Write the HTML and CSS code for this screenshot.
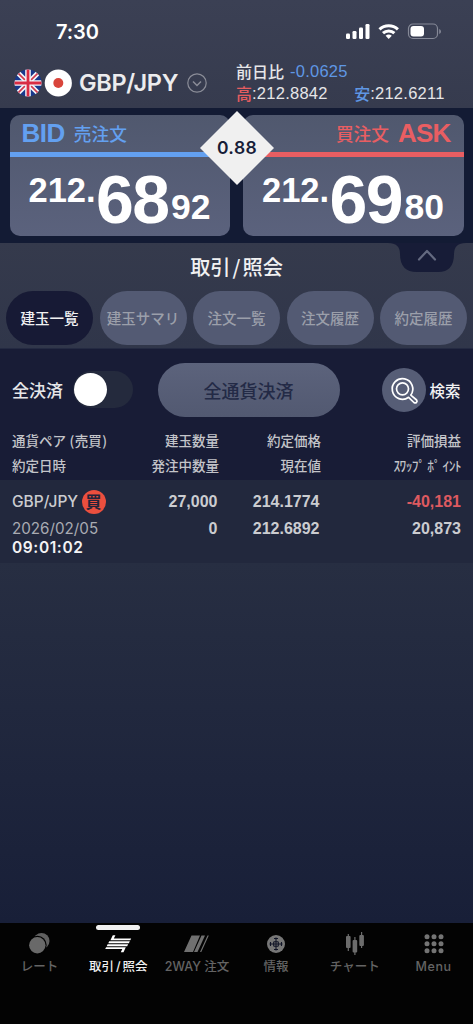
FILE: index.html
```html
<!DOCTYPE html>
<html lang="ja">
<head>
<meta charset="utf-8">
<meta name="viewport" content="width=device-width, initial-scale=1">
<title>取引/照会</title>
<link rel="stylesheet" href="styles.css">
</head>
<body>
<div class="app">
  <header class="top">
    <div class="status">
      <span class="clock">7:30</span>
      <svg class="status-icons" width="98" height="18" viewBox="0 0 98 18">
        <g fill="#fff">
          <rect x="1" y="10.500" width="4" height="5.500" rx="1.200"/><rect x="7.500" y="8" width="4" height="8" rx="1.200"/><rect x="14" y="4.500" width="4" height="11.500" rx="1.200"/><rect x="20.500" y="1" width="4" height="15" rx="1.200"/>
        </g>
        <g fill="none" stroke="#fff" stroke-width="3">
          <path d="M34.500 6.400a13.200 13.200 0 0 1 18.400 0"/><path d="M38 10.200a8.200 8.200 0 0 1 11.400 0"/>
        </g>
        <path d="M40.600 12.800a4.600 4.600 0 0 1 6.200 0L43.700 16z" fill="#fff"/>
        <rect x="63.500" y="1" width="29" height="14.500" rx="4.500" fill="none" stroke="#858997" stroke-width="1.200"/>
        <rect x="65.500" y="3" width="13.500" height="10.500" rx="3" fill="#fff"/>
        <path d="M94.200 6v5q1.800-.8 1.800-2.500t-1.800-2.500z" fill="#858997"/>
      </svg>
    </div>
    <div class="instrument">
      <div class="pair">
        <svg width="58" height="28" viewBox="0 0 58 28">
          <defs><clipPath id="uk"><circle cx="14" cy="14" r="13.500"/></clipPath></defs>
          <g clip-path="url(#uk)">
            <rect width="28" height="28" fill="#17388c"/>
            <path d="M0 0l28 28M28 0L0 28" stroke="#f4f4f8" stroke-width="5"/>
            <path d="M0 0l28 28M28 0L0 28" stroke="#d13a4e" stroke-width="1.600"/>
            <path d="M14 0v28M0 14h28" stroke="#f4f4f8" stroke-width="5.600"/>
            <path d="M14 0v28M0 14h28" stroke="#d92c43" stroke-width="2.800"/>
          </g>
          <circle cx="44.300" cy="14" r="13.600" fill="#fff"/><circle cx="44.300" cy="14" r="5" fill="#d9453b"/>
        </svg>
        <span class="pair-name">GBP/JPY</span>
        <svg class="pair-menu" width="20" height="20" viewBox="0 0 20 20" fill="none" stroke="#8b8d98" stroke-width="1.200"><circle cx="10" cy="10" r="9.200"/><path d="M6 8.500l4 4 4-4" stroke-width="1.500"/></svg>
      </div>
      <div class="day">
        <div class="day-line"><span class="cjk">前日比</span><span class="num low change">-0.0625</span></div>
        <div class="day-line"><span class="cjk high">高</span><span class="num">:212.8842</span><span class="cjk low low-label">安</span><span class="num">:212.6211</span></div>
      </div>
    </div>
  </header>

  <section class="quotes">
    <div class="card bid">
      <div class="card-head"><b>BID</b><span>売注文</span></div>
      <div class="price"><span class="fig">212.</span><span class="big">68</span><span class="pip">92</span></div>
    </div>
    <div class="card ask">
      <div class="card-head"><span>買注文</span><b>ASK</b></div>
      <div class="price"><span class="fig">212.</span><span class="big">69</span><span class="pip">80</span></div>
    </div>
    <div class="spread">0.88</div>
  </section>

  <section class="trade">
    <svg class="notch" width="78" height="30" viewBox="0 0 78 30"><path d="M0 0h78q-12 0-12 11 0 18-16 18H29Q12 29 12 11 12 0 0 0z" fill="#171c37"/><path d="M31 16.500l8-8.500 8 8.500" fill="none" stroke="#646a80" stroke-width="2.200" stroke-linecap="round" stroke-linejoin="round"/></svg>
    <h1 class="title">取引<i>/</i>照会</h1>
    <nav class="tabs">
      <a class="tab active">建玉一覧</a><a class="tab">建玉サマリ</a><a class="tab">注文一覧</a><a class="tab">注文履歴</a><a class="tab">約定履歴</a>
    </nav>
  </section>

  <section class="controls">
    <span class="all-label">全決済</span>
    <span class="toggle"><span class="knob"></span></span>
    <span class="close-all">全通貨決済</span>
    <span class="search">
      <svg width="44" height="44" viewBox="0 0 44 44"><circle cx="22" cy="22" r="22" fill="#565d76"/><g fill="none" stroke="#fff" stroke-width="1.700" stroke-linejoin="round"><path d="M28.800 27.100a10.300 10.300 0 1 0-2.200 2.200l5.300 5.200q1.500 1 2.600-.1t.1-2.400z"/><circle cx="20.500" cy="20.800" r="6"/></g></svg>
      <span>検索</span>
    </span>
  </section>

  <section class="columns">
    <div class="grid"><span class="left">通貨ペア <em>(</em>売買<em>)</em></span><span>建玉数量</span><span>約定価格</span><span>評価損益</span></div>
    <div class="grid"><span class="left">約定日時</span><span>発注中数量</span><span>現在値</span><span class="half">ｽﾜｯﾌﾟ ﾎﾟ ｲﾝﾄ</span></div>
  </section>

  <section class="position">
    <div class="grid r1"><span class="left sym">GBP/JPY<span class="buy">買</span></span><span>27,000</span><span>214.1774</span><span class="loss">-40,181</span></div>
    <div class="grid r2"><span class="left date">2026/02/05</span><span>0</span><span>212.6892</span><span>20,873</span></div>
    <div class="time">09:01:02</div>
  </section>

  <main class="rest"></main>

  <nav class="bottom">
    <a class="item">
      <svg width="30" height="26" viewBox="0 0 30 26"><circle cx="17.500" cy="10" r="8" fill="#606060"/><circle cx="13.500" cy="14" r="9.200" fill="#030303"/><circle cx="13.300" cy="14.300" r="8.200" fill="#696969"/></svg>
      <span class="n1">レート</span>
    </a>
    <a class="item on">
      <svg width="30" height="26" viewBox="0 0 30 26" fill="#fff"><path d="M9.800 4.200h2.600L10.800 7.400h17.400l-.9 1.900H7.400zM6.200 10.300h20.600l-.9 1.900H5.300zM4.600 13.300h20.500l-.9 1.900H3.700zM3.100 16.200h19.700l-2.300 5h-2.700l1.500-3.100H2.200z"/></svg>
      <span class="n2">取引<i>/</i>照会</span>
    </a>
    <a class="item">
      <svg width="30" height="26" viewBox="0 0 30 26" fill="#707070"><path d="M9.500 4.500h8.500L11 21H2zM19.500 4.500h3.500L15.500 21h-3.500zM25.500 4.500h1.300L19.300 21H18z"/></svg>
      <span class="n3">2WAY 注文</span>
    </a>
    <a class="item">
      <svg width="30" height="26" viewBox="0 0 30 26"><circle cx="15" cy="13" r="9" fill="#777"/><path d="M15 6.500v13M8.500 13h13M13 7.500h4M13 18.500h4M9.500 11v4M20.500 11v4M12.700 10.700h4.600M12.700 15.300h4.600M12.700 10.700v4.600M17.300 10.700v4.600" fill="none" stroke="#101426" stroke-width="1.100"/></svg>
      <span class="n4">情報</span>
    </a>
    <a class="item">
      <svg width="30" height="26" viewBox="0 0 30 26" fill="#6c6c6c"><rect x="6" y="5" width="4.600" height="12" rx="1"/><path d="M7.700 3h1.200v17H7.700zM14.300 6h1.200v18h-1.200zM21 1h1.200v16H21z"/><rect x="12.600" y="9" width="4.600" height="12.500" rx="1"/><rect x="19.300" y="4" width="4.600" height="11" rx="1"/></svg>
      <span class="n5">チャート</span>
    </a>
    <a class="item">
      <svg width="30" height="26" viewBox="0 0 30 26" fill="#747474"><circle cx="8" cy="5.700" r="2.500"/><circle cx="15" cy="5.700" r="2.500"/><circle cx="22" cy="5.700" r="2.500"/><circle cx="8" cy="12.700" r="2.500"/><circle cx="15" cy="12.700" r="2.500"/><circle cx="22" cy="12.700" r="2.500"/><circle cx="8" cy="19.700" r="2.500"/><circle cx="15" cy="19.700" r="2.500"/><circle cx="22" cy="19.700" r="2.500"/></svg>
      <span class="n6">Menu</span>
    </a>
  </nav>
</div>
</body>
</html>
```
FILE: styles.css
```css
* { box-sizing: border-box; }
body { margin: 0; background: #030303; font-family: Inter, "Noto Sans CJK JP", sans-serif; color: #e6e6e8; }
i, em { font-style: normal; }
svg { display: block; flex: none; }
.app { width: 473px; height: 1024px; display: flex; flex-direction: column; overflow: hidden; }
.app > * { flex: none; }

.top { height: 108px; background: linear-gradient(#3b4054, #363b4e); }
.status { height: 63px; padding: 0 30px 0 56px; display: flex; align-items: center; justify-content: space-between; }
.clock { font-size: 20px; font-weight: 600; color: #fff; letter-spacing: -0.1px; }
.instrument { height: 45px; display: flex; }
.pair { width: 236px; padding: 5px 0 0 14px; height: 34px; display: flex; align-items: center; }
.pair-name { font-size: 23.5px; font-weight: 600; line-height: 28px; margin-left: 7px; width: 108px; letter-spacing: -0.3px; white-space: nowrap; color: #ececee; }
.day { margin-top: -3px; }
.day-line { display: flex; align-items: center; height: 22px; white-space: nowrap; }
.cjk { font-family: "Noto Sans CJK JP", sans-serif; font-weight: 500; font-size: 16px; line-height: 22px; }
.num { font-family: "Liberation Sans", sans-serif; font-size: 16.5px; letter-spacing: 0.25px; line-height: 22px; }
.change { margin-left: 6px; }
.low { color: #5f97e4; }
.high { color: #e55d60; }
.low-label { margin-left: 26.5px; }

.quotes { position: relative; height: 135px; background: #131b34; padding: 7px 9.5px; display: flex; gap: 13px; }
.card { flex: 1; height: 121px; border-radius: 10px; overflow: hidden; background: linear-gradient(#50586e, #5b627d); font-family: "Liberation Sans", "Noto Sans CJK JP", sans-serif; }
.card-head { height: 42px; display: flex; align-items: center; gap: 9px; border-bottom: 5px solid; font-family: inherit; }
.card-head b { font-size: 26px; line-height: 37px; }
.card-head span { font-family: "Noto Sans CJK JP", sans-serif; font-weight: 500; font-size: 17.7px; line-height: 37px; }
.bid .card-head { color: #63a0f0; padding-left: 12px; }
.bid b { letter-spacing: -0.5px; }
.ask .card-head { color: #e95e62; padding-right: 13px; justify-content: flex-end; }
.ask b { letter-spacing: -0.8px; }
.price { display: flex; align-items: flex-start; color: #fff; font-weight: 700; padding-left: 19px; white-space: nowrap; }
.fig { font-size: 34.5px; line-height: 40px; margin-top: 13px; width: 67.5px; }
.big { font-size: 68px; line-height: 76px; margin-top: 4px; letter-spacing: -1.5px; width: 75px; }
.pip { font-size: 35.5px; line-height: 40px; margin-top: 30px; }
.spread { position: absolute; left: 200px; top: 3px; width: 74px; height: 74px; clip-path: polygon(50% 0, 100% 50%, 50% 100%, 0 50%); background: #f0f0f0; color: #171d38; font-size: 17.5px; letter-spacing: 0.4px; font-weight: 600; line-height: 74px; text-align: center; }

.trade { position: relative; height: 106px; background: linear-gradient(#353a4c, #30364a); border-bottom: 1px solid #242a42; }
.notch { position: absolute; left: 388px; top: 0; }
.title { margin: 0; height: 48px; text-align: center; font: 500 20.2px/48px "Noto Sans CJK JP", sans-serif; color: #f1f1f2; }
.title i { padding: 0 2px; }
.tabs { display: flex; gap: 6.500px; padding: 0 6px; }
.tab { flex: 1; height: 54px; border-radius: 27px; background: #535a73; color: #9b9faa; font: 500 14.5px/54px "Noto Sans CJK JP", sans-serif; text-align: center; white-space: nowrap; }
.tab.active { background: #171a35; color: #f1f1f2; }

.controls { height: 81px; background: #181c36; display: flex; align-items: center; padding-left: 12px; font-family: "Noto Sans CJK JP", sans-serif; font-weight: 500; }
.all-label { font-size: 17px; width: 60.5px; white-space: nowrap; }
.toggle { width: 60px; height: 37px; border-radius: 19px; background: #242a3d; padding: 2px 1px; }
.knob { display: block; width: 33px; height: 33px; border-radius: 50%; background: #fff; }
.close-all { margin-left: 25px; width: 182px; height: 54px; border-radius: 27px; background: linear-gradient(#5c637c, #525971); text-align: center; color: #232a46; font-size: 18px; line-height: 54px; }
.search { margin-left: 42px; display: flex; align-items: center; gap: 4px; font-size: 15.5px; color: #f1f1f2; }

.grid { display: grid; grid-template-columns: 130px 77px 102px 140px; padding: 0 12px; text-align: right; white-space: nowrap; }
.left { text-align: left; }
.columns { height: 50px; margin-top: -2px; padding-bottom: 2px; background: #181c36; color: #c3c4c9; font: 500 13.5px/24.500px "Noto Sans CJK JP", sans-serif; height: 52px; }
.columns em { padding: 0 0.5px; }
.half { letter-spacing: -0.6px; }
.position { height: 83px; padding-top: 8px; background: #22283d; font-family: "Liberation Sans", sans-serif; font-size: 16px; font-weight: 700; color: #cbccd0; }
.position .grid { grid-template-columns: 129px 76.500px 102px 141.500px; }
.r1 { line-height: 27px; }
.r2 { line-height: 27px; }
.sym { font-family: Inter, sans-serif; font-size: 15.5px; font-weight: 500; display: flex; align-items: center; }
.buy { margin-left: 3.5px; width: 24px; height: 24px; border-radius: 50%; background: #eb4f3e; color: #22243a; font: 700 16px/23px "Noto Sans CJK JP", sans-serif; text-align: center; }
.date { font-family: Inter, sans-serif; font-weight: 400; font-size: 15.2px; color: #a9abb2; }
.time { font-family: Inter, sans-serif; font-size: 15.5px; font-weight: 600; color: #f3f3f4; line-height: 20px; letter-spacing: 0.6px; margin-top: -4px; padding-left: 12px; }
.loss { color: #dd5a60; }
.rest { height: 360px; background: linear-gradient(#272e42, #181f38); }

.bottom { height: 101px; background: #030303; display: grid; grid-template-columns: repeat(6, 1fr); }
.item { position: relative; display: flex; flex-direction: column; align-items: center; padding-top: 8px; color: #646464; font-size: 12.500px; font-weight: 500; line-height: 20px; white-space: nowrap; }
.n6 { letter-spacing: 0.6px; }
.on { color: #f1f1f1; }
.on::before { content: ""; position: absolute; top: 2px; width: 44px; height: 5px; border-radius: 2.500px; background: #f1f1f1; }
.on i { padding: 0 2px; }
```
